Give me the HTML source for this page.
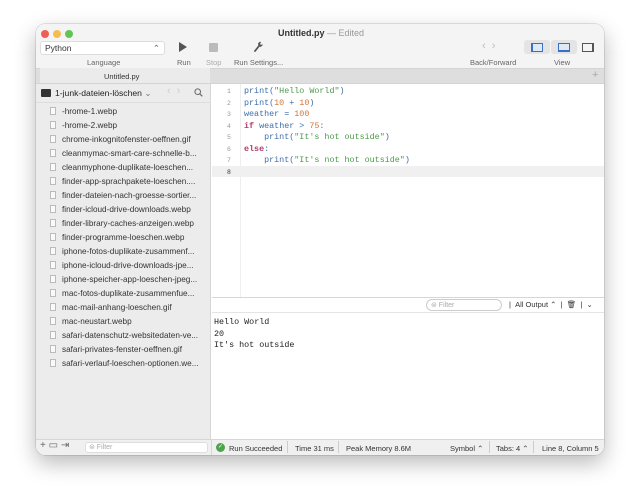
<!DOCTYPE html><html><head><style>
*{box-sizing:border-box;margin:0;padding:0}
body{width:640px;height:502px;background:#fff;font-family:"Liberation Sans",sans-serif;font-size:8px;color:#333;position:relative;overflow:hidden}
.win{position:absolute;left:36px;top:24px;width:568px;height:431px;border-radius:9px;background:#fff;box-shadow:0 8px 22px rgba(0,0,0,.28),0 0 0 .5px rgba(0,0,0,.2);overflow:hidden}
.a{position:absolute}
.tb{left:0;top:0;width:568px;height:44px;background:#f4f4f4}
.dot{width:8px;height:8px;border-radius:50%;top:6px}
.mono{font-family:"Liberation Mono",monospace;font-size:8.4px}
.lab{font-size:7.5px;color:#666}
.side{left:0;top:60px;width:175px;height:356px;background:#ececec;border-right:1px solid #d6d6d6}
.row{position:absolute;left:14px;height:14px;font-size:8.2px;color:#333;white-space:nowrap}
.row i{display:inline-block;width:6px;height:8px;border:1px solid #bbb;background:#fafafa;margin-right:6px;vertical-align:-1px}
.ln{position:absolute;left:0;width:14px;text-align:center;font-family:"Liberation Mono",monospace;font-size:6.5px;color:#999}
.cd{position:absolute;left:208px;white-space:pre;font-family:"Liberation Mono",monospace;font-size:8.4px;color:#3f6ea8}
.s{color:#4d9a4d}.n{color:#d2733a}.k{color:#b23a6a;font-weight:bold}
.st{font-size:7.5px;color:#333}
</style></head><body>
<div class="win">
<div class="a tb"></div>
<div class="a dot" style="left:5px;background:#ed5f57"></div>
<div class="a dot" style="left:17px;background:#f5bd4f"></div>
<div class="a dot" style="left:29px;background:#61c554"></div>
<div class="a" style="left:242px;top:4px;font-size:9px;font-weight:bold;color:#333">Untitled.py <span style="font-weight:normal;color:#999">— Edited</span></div>
<div class="a" style="left:4px;top:17px;width:125px;height:14px;background:#fff;border:1px solid #ddd;border-radius:3px;font-size:8.5px;padding:1px 4px;color:#333">Python<span style="float:right;color:#666">⌃</span></div>
<div class="a lab" style="left:51px;top:34px">Language</div>
<div class="a" style="left:143px;top:18px;width:0;height:0;border-left:8px solid #555;border-top:5px solid transparent;border-bottom:5px solid transparent"></div>
<div class="a lab" style="left:141px;top:34px">Run</div>
<div class="a" style="left:173px;top:19px;width:9px;height:9px;background:#bbb;border-radius:1px"></div>
<div class="a lab" style="left:170px;top:34px;color:#aaa">Stop</div>
<svg class="a" style="left:217px;top:17px" width="10" height="11" viewBox="0 0 10 11"><path d="M2 10 L6 5" stroke="#555" stroke-width="1.8" stroke-linecap="round"/><path d="M5.5 5 L5 2.5 L7 0.5 L8 1.5 L7 3 L8 4 L9.5 3 L9.5 4.5 L7.5 6 Z" fill="#555"/></svg>
<div class="a lab" style="left:198px;top:34px">Run Settings...</div>
<div class="a" style="left:446px;top:16px;font-size:11px;color:#bbb">‹ &nbsp;›</div>
<div class="a lab" style="left:434px;top:34px">Back/Forward</div>
<div class="a" style="left:488px;top:16px;width:26px;height:14px;background:#e4e4e4;border-radius:3px"></div>
<div class="a" style="left:495px;top:19px;width:12px;height:9px;border:1px solid #3a6fc9;border-left:2px solid #3a6fc9;background:#dfe8f5"></div>
<div class="a" style="left:515px;top:16px;width:26px;height:14px;background:#e4e4e4;border-radius:3px"></div>
<div class="a" style="left:522px;top:19px;width:12px;height:9px;border:1px solid #3a6fc9;border-bottom:2px solid #3a6fc9;background:#dfe8f5"></div>
<div class="a" style="left:546px;top:19px;width:12px;height:9px;border:1px solid #555;border-right:2px solid #555"></div>
<div class="a lab" style="left:518px;top:34px">View</div>
<div class="a" style="left:0;top:44px;width:568px;height:16px;background:#dedede;border-top:1px solid #d4d4d4;border-bottom:1px solid #d4d4d4"></div>
<div class="a" style="left:4px;top:44px;width:170px;height:16px;background:#ebebeb;border-bottom:1px solid #d4d4d4"></div>
<div class="a" style="left:68px;top:48px;font-size:7.5px;color:#333">Untitled.py</div>
<div class="a" style="left:556px;top:45px;font-size:11px;color:#aaa">+</div>
<div class="a side"></div>
<div class="a" style="left:5px;top:65px;width:10px;height:8px;background:#333;border-radius:1px"></div>
<div class="a" style="left:19px;top:64px;font-size:8.6px;color:#222">1-junk-dateien-löschen <span style="color:#777">⌄</span></div>
<div class="a" style="left:131px;top:61px;font-size:11px;color:#ccc">‹ &nbsp;›</div>
<svg class="a" style="left:158px;top:64px" width="9" height="9" viewBox="0 0 9 9"><circle cx="3.7" cy="3.7" r="2.8" fill="none" stroke="#666" stroke-width="1"/><path d="M5.8 5.8 L8.3 8.3" stroke="#666" stroke-width="1.1"/></svg>
<div class="a" style="left:0;top:78px;width:175px;height:1px;background:#ddd"></div>
<div class="row" style="top:83px"><i></i>-hrome-1.webp</div>
<div class="row" style="top:97px"><i></i>-hrome-2.webp</div>
<div class="row" style="top:111px"><i></i>chrome-inkognitofenster-oeffnen.gif</div>
<div class="row" style="top:125px"><i></i>cleanmymac-smart-care-schnelle-b...</div>
<div class="row" style="top:139px"><i></i>cleanmyphone-duplikate-loeschen...</div>
<div class="row" style="top:153px"><i></i>finder-app-sprachpakete-loeschen....</div>
<div class="row" style="top:167px"><i></i>finder-dateien-nach-groesse-sortier...</div>
<div class="row" style="top:181px"><i></i>finder-icloud-drive-downloads.webp</div>
<div class="row" style="top:195px"><i></i>finder-library-caches-anzeigen.webp</div>
<div class="row" style="top:209px"><i></i>finder-programme-loeschen.webp</div>
<div class="row" style="top:223px"><i></i>iphone-fotos-duplikate-zusammenf...</div>
<div class="row" style="top:237px"><i></i>iphone-icloud-drive-downloads-jpe...</div>
<div class="row" style="top:251px"><i></i>iphone-speicher-app-loeschen-jpeg...</div>
<div class="row" style="top:265px"><i></i>mac-fotos-duplikate-zusammenfue...</div>
<div class="row" style="top:279px"><i></i>mac-mail-anhang-loeschen.gif</div>
<div class="row" style="top:293px"><i></i>mac-neustart.webp</div>
<div class="row" style="top:307px"><i></i>safari-datenschutz-websitedaten-ve...</div>
<div class="row" style="top:321px"><i></i>safari-privates-fenster-oeffnen.gif</div>
<div class="row" style="top:335px"><i></i>safari-verlauf-loeschen-optionen.we...</div>
<!-- editor -->
<div class="a" style="left:176px;top:60px;width:392px;height:213px;background:#fff"></div>
<div class="a" style="left:204px;top:60px;width:1px;height:213px;background:#eee"></div>
<div class="a" style="left:176px;top:142px;width:392px;height:11px;background:#f0f0f0"></div>
<div class="a" style="left:186px;top:62px;width:14px">
<div class="ln" style="top:2px">1</div><div class="ln" style="top:13.5px">2</div><div class="ln" style="top:25px">3</div><div class="ln" style="top:36.5px">4</div><div class="ln" style="top:48px">5</div><div class="ln" style="top:59.5px">6</div><div class="ln" style="top:71px">7</div><div class="ln" style="top:82.5px;color:#333">8</div></div>
<div class="cd" style="top:62px">print(<span class="s">"Hello World"</span>)</div>
<div class="cd" style="top:73.5px">print(<span class="n">10</span> + <span class="n">10</span>)</div>
<div class="cd" style="top:85px">weather = <span class="n">100</span></div>
<div class="cd" style="top:96.5px"><span class="k">if</span> weather &gt; <span class="n">75</span>:</div>
<div class="cd" style="top:108px">    print(<span class="s">"It's hot outside"</span>)</div>
<div class="cd" style="top:119.5px"><span class="k">else</span>:</div>
<div class="cd" style="top:131px">    print(<span class="s">"It's not hot outside"</span>)</div>
<!-- console -->
<div class="a" style="left:176px;top:273px;width:392px;height:16px;background:#fff;border-top:1px solid #d6d6d6;border-bottom:1px solid #e4e4e4"></div>
<div class="a" style="left:390px;top:275px;width:76px;height:12px;border:1px solid #ccc;border-radius:6px;font-size:7px;color:#aaa;padding:1px 4px">⊜ Filter</div>
<div class="a" style="left:473px;top:276px;font-size:7.5px;color:#333">| &nbsp;All Output ⌃ &nbsp;| &nbsp;🗑︎ &nbsp;| &nbsp;⌄</div>
<div class="a mono" style="left:178px;top:293px;line-height:11.5px;color:#222;white-space:pre">Hello World
20
It's hot outside</div>
<!-- status bar -->
<div class="a" style="left:0;top:415px;width:568px;height:16px;background:#f0f0f0;border-top:1px solid #d6d6d6"></div>
<div class="a" style="left:175px;top:415px;width:1px;height:16px;background:#d6d6d6"></div>
<div class="a" style="left:4px;top:416px;font-size:10px;color:#666">+ ▭ ⇥</div>
<div class="a" style="left:49px;top:418px;width:123px;height:11px;background:#fff;border:1px solid #ddd;border-radius:3px;font-size:7px;color:#aaa;padding:0 3px">⊜ Filter</div>
<div class="a" style="left:180px;top:419px;width:9px;height:9px;border-radius:50%;background:#4ca44c;color:#fff;font-size:6px;text-align:center;line-height:9px">✓</div>
<div class="a st" style="left:193px;top:420px">Run Succeeded</div>
<div class="a" style="left:251px;top:417px;width:1px;height:12px;background:#ccc"></div>
<div class="a st" style="left:259px;top:420px">Time 31 ms</div>
<div class="a" style="left:302px;top:417px;width:1px;height:12px;background:#ccc"></div>
<div class="a st" style="left:310px;top:420px">Peak Memory 8.6M</div>
<div class="a st" style="left:414px;top:420px">Symbol ⌃</div>
<div class="a" style="left:453px;top:417px;width:1px;height:12px;background:#ccc"></div>
<div class="a st" style="left:460px;top:420px">Tabs: 4 ⌃</div>
<div class="a" style="left:497px;top:417px;width:1px;height:12px;background:#ccc"></div>
<div class="a st" style="left:506px;top:420px">Line 8, Column 5</div>
</div>
</body></html>
